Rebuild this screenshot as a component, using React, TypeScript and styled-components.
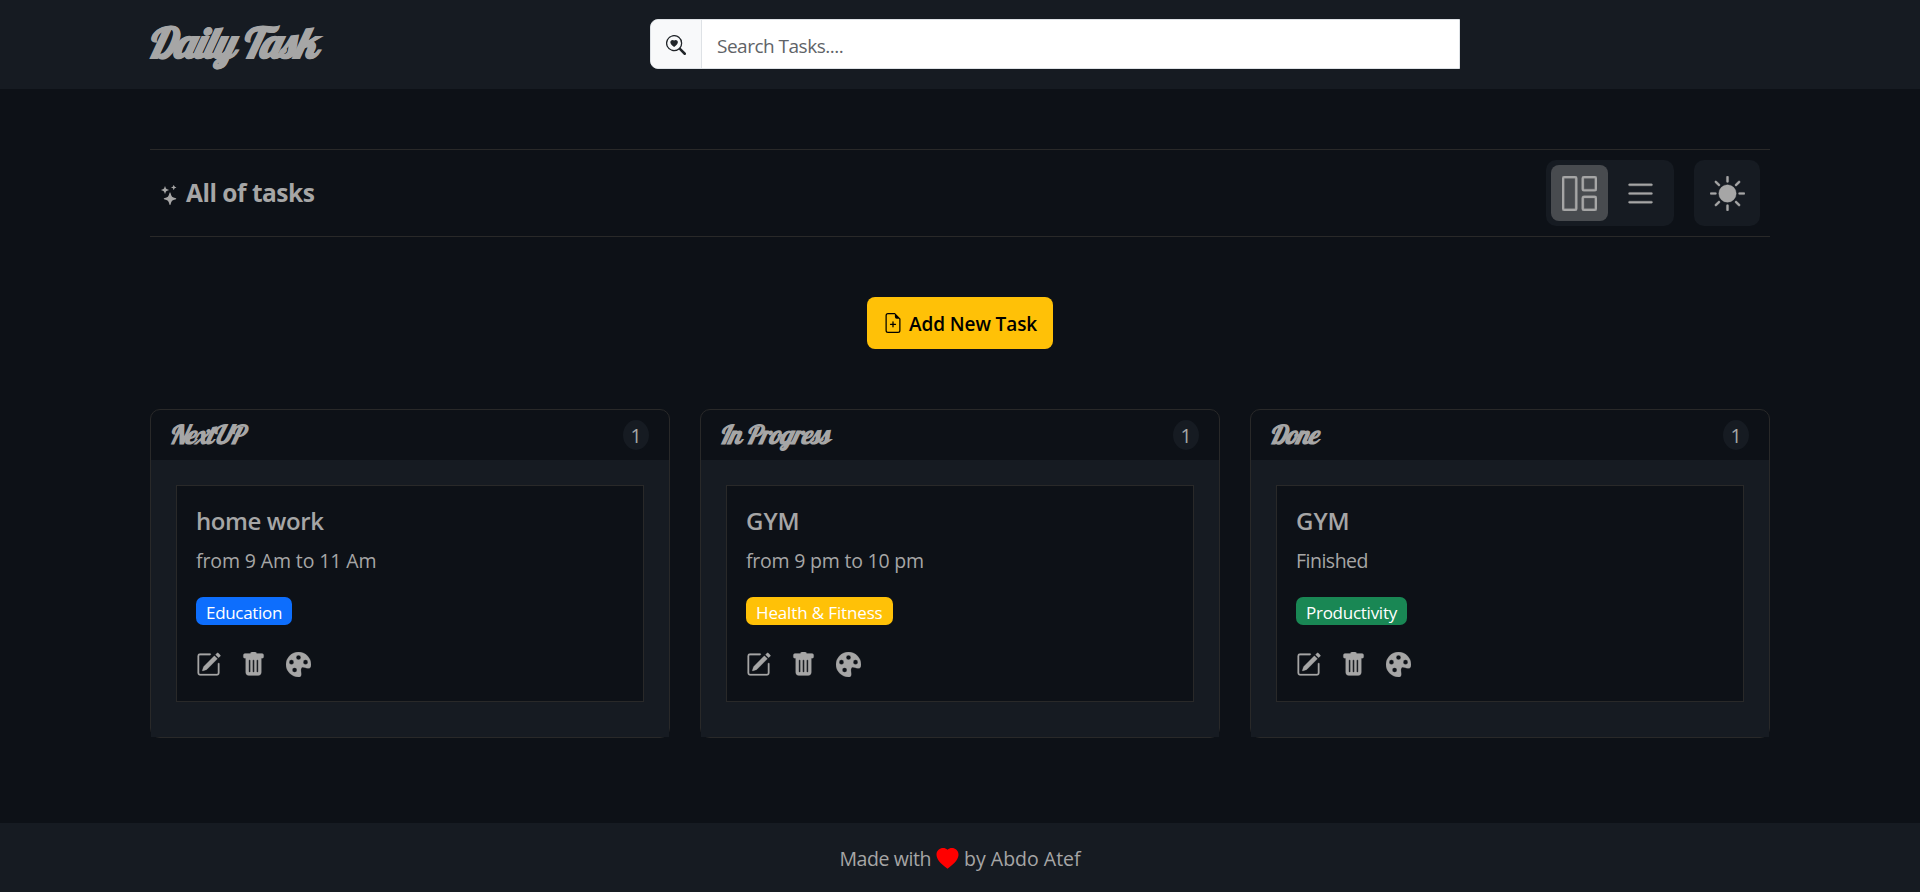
import React from 'react';
import styled, { createGlobalStyle } from 'styled-components';
import {
  BsFileEarmarkPlus,
  BsGrid1X2,
  BsHeartFill,
  BsList,
  BsPaletteFill,
  BsPencilSquare,
  BsSearchHeart,
  BsStars,
  BsSunFill,
  BsTrashFill,
} from 'react-icons/bs';

const color = {
  page: '#0d1117',
  panel: '#161b22',
  line: '#292929',
  text: '#a6a6a6',
  active: '#484b4f',
  yellow: '#ffc107',
};

const GlobalStyle = createGlobalStyle`
  *, *::before, *::after { box-sizing: border-box; }
  body {
    margin: 0;
    background: ${color.page};
    color: ${color.text};
    font-family: "Segoe UI", "Open Sans", "Noto Sans", sans-serif;
    font-size: 19.5px;
    line-height: 30px;
  }
  h1, h2, h3, p { margin: 0; }
  button, input { font: inherit; color: inherit; }
  svg { display: block; }
`;

const Page = styled.div`
  display: flex;
  flex-direction: column;
  min-height: 892px;
`;

const Container = styled.div`
  width: 1620px;
  margin: 0 auto;
`;

const Header = styled.header`
  height: 89px;
  background: ${color.panel};
`;

const HeaderRow = styled(Container)`
  display: grid;
  grid-template-columns: 500px 810px;
  align-items: center;
  height: 88px;
`;

const Logo = styled.h1`
  margin: -2px 0 0 -3px;
  font-family: Lobster, "Liberation Serif", serif;
  font-size: 42px;
  font-style: italic;
  font-weight: 700;
  line-height: 56px;
  letter-spacing: -1.4px;
  -webkit-text-stroke: 0.8px ${color.text};
`;

const SearchGroup = styled.div`
  display: flex;
  height: 50px;
  border: 1px solid #dee2e6;
  border-radius: 8px 0 0 8px;
  background: #fff;
  overflow: hidden;
`;

const SearchAddon = styled.span`
  display: flex;
  align-items: center;
  justify-content: center;
  width: 51px;
  border-right: 1px solid #dee2e6;
  background: #f8f9fa;
  color: #212529;
  font-size: 20px;
  svg { margin-top: 2px; }
`;

const SearchInput = styled.input`
  flex: 1;
  border: 0;
  outline: 0;
  padding: 3px 15px 0;
  background: transparent;
  color: #212529;
  font-size: 19px;
  letter-spacing: -0.5px;
  &::placeholder {
    color: #5f6367;
    opacity: 1;
  }
`;

const Main = styled(Container)`
  flex: 1;
  display: flex;
  flex-direction: column;
  padding-top: 60px;
`;

const Toolbar = styled.section`
  display: flex;
  align-items: center;
  justify-content: space-between;
  height: 88px;
  padding: 0 10px;
  border-top: 1px solid ${color.line};
  border-bottom: 1px solid ${color.line};
`;

const ToolbarTitle = styled.h2`
  display: flex;
  align-items: center;
  gap: 6px;
  font-size: 24.5px;
  font-weight: 700;
  letter-spacing: -0.48px;
  svg {
    width: 20px;
    height: 20px;
    margin-top: 4px;
  }
`;

const ToolbarActions = styled.div`
  display: flex;
  gap: 20px;
`;

const ViewSwitch = styled.div`
  display: flex;
  gap: 4px;
  padding: 5px;
  border-radius: 10px;
  background: ${color.panel};
`;

const ViewButton = styled.button<{ $active?: boolean }>`
  display: grid;
  place-items: center;
  width: 57px;
  height: 56px;
  padding: 0;
  border: 0;
  border-radius: 8px;
  background: ${({ $active }) => ($active ? color.active : 'transparent')};
  font-size: 35px;
  svg { stroke: currentColor; stroke-width: 0.15px; }
`;

const ThemeButton = styled.button`
  display: grid;
  place-items: center;
  width: 66px;
  height: 66px;
  padding: 0;
  border: 0;
  border-radius: 10px;
  background: ${color.panel};
  font-size: 35px;
  svg { stroke: currentColor; stroke-width: 0.15px; }
`;

const AddButton = styled.button`
  display: flex;
  align-items: center;
  align-self: center;
  gap: 6px;
  width: 186px;
  height: 52px;
  margin-top: 60px;
  padding: 0 16px;
  border: 0;
  border-radius: 8px;
  background: ${color.yellow};
  color: #000;
  font-size: 19px;
  font-weight: 600;
  letter-spacing: -0.1px;
  white-space: nowrap;
  svg { flex: none; width: 20px; height: 20px; }
  span { padding-top: 2px; }
`;

const Board = styled.section`
  display: grid;
  grid-template-columns: repeat(3, 1fr);
  gap: 30px;
  margin-top: 60px;
`;

const Column = styled.article`
  border: 1px solid ${color.line};
  border-radius: 10px;
`;

const ColumnHeader = styled.header`
  display: flex;
  align-items: center;
  justify-content: space-between;
  height: 50px;
  padding: 0 20px;
`;

const ColumnTitle = styled.h2<{ $track: number }>`
  margin-left: -2px;
  font-family: Lobster, "Liberation Serif", serif;
  font-size: 26px;
  font-style: italic;
  font-weight: 700;
  letter-spacing: ${({ $track }) => $track}px;
`;

const Count = styled.span`
  width: 26px;
  height: 30px;
  padding-top: 1px;
  border-radius: 50%;
  background: ${color.panel};
  font-size: 19.5px;
  text-align: center;
`;

const ColumnBody = styled.div`
  height: 277px;
  padding: 25px;
  background: ${color.panel};
`;

const Card = styled.div`
  height: 217px;
  padding: 20px 19px 0;
  border: 1px solid ${color.line};
  background: ${color.page};
`;

const CardTitle = styled.h3<{ $track: number }>`
  font-size: 24px;
  font-weight: 600;
  letter-spacing: ${({ $track }) => $track}px;
`;

const CardText = styled.p<{ $track: number }>`
  margin-top: 10px;
  letter-spacing: ${({ $track }) => $track}px;
`;

const Badge = styled.span<{ $bg: string; $track: number }>`
  display: block;
  width: fit-content;
  height: 28px;
  margin-top: 21px;
  padding: 2px 10px 0;
  border-radius: 7px;
  background: ${({ $bg }) => $bg};
  color: #fff;
  font-size: 17px;
  line-height: 28px;
  letter-spacing: ${({ $track }) => $track}px;
`;

const CardActions = styled.div`
  display: flex;
  gap: 20px;
  margin-top: 27px;
  font-size: 25px;
  svg { stroke: currentColor; stroke-width: 0.15px; }
`;

const Footer = styled.footer`
  display: flex;
  align-items: center;
  justify-content: center;
  gap: 5px;
  height: 69px;
  padding-top: 3px;
  background: ${color.panel};
`;

const FooterText = styled.span<{ $track?: number }>`
  letter-spacing: ${({ $track = 0 }) => $track}px;
`;

const Heart = styled(BsHeartFill)`
  width: 23px;
  height: 22px;
  color: #f00;
`;

interface Task {
  column: string;
  columnTrack: number;
  title: string;
  titleTrack: number;
  text: string;
  textTrack: number;
  category: string;
  categoryColor: string;
  categoryTrack: number;
}

const tasks: Task[] = [
  {
    column: 'NextUP',
    columnTrack: -1.3,
    title: 'home work',
    titleTrack: -0.4,
    text: 'from 9 Am to 11 Am',
    textTrack: -0.12,
    category: 'Education',
    categoryColor: '#0d6efd',
    categoryTrack: -0.3,
  },
  {
    column: 'In Progress',
    columnTrack: -0.7,
    title: 'GYM',
    titleTrack: 0,
    text: 'from 9 pm to 10 pm',
    textTrack: -0.22,
    category: 'Health & Fitness',
    categoryColor: '#ffc107',
    categoryTrack: -0.14,
  },
  {
    column: 'Done',
    columnTrack: -0.9,
    title: 'GYM',
    titleTrack: 0,
    text: 'Finished',
    textTrack: -0.5,
    category: 'Productivity',
    categoryColor: '#198754',
    categoryTrack: -0.26,
  },
];

const TaskColumn = ({ task }: { task: Task }) => (
  <Column>
    <ColumnHeader>
      <ColumnTitle $track={task.columnTrack}>{task.column}</ColumnTitle>
      <Count>1</Count>
    </ColumnHeader>
    <ColumnBody>
      <Card>
        <CardTitle $track={task.titleTrack}>{task.title}</CardTitle>
        <CardText $track={task.textTrack}>{task.text}</CardText>
        <Badge $bg={task.categoryColor} $track={task.categoryTrack}>
          {task.category}
        </Badge>
        <CardActions>
          <BsPencilSquare />
          <BsTrashFill />
          <BsPaletteFill />
        </CardActions>
      </Card>
    </ColumnBody>
  </Column>
);

export default function App() {
  return (
    <Page>
      <GlobalStyle />
      <Header>
        <HeaderRow>
          <Logo>Daily Task</Logo>
          <SearchGroup>
            <SearchAddon>
              <BsSearchHeart />
            </SearchAddon>
            <SearchInput placeholder="Search Tasks...." />
          </SearchGroup>
        </HeaderRow>
      </Header>
      <Main as="main">
        <Toolbar>
          <ToolbarTitle>
            <BsStars />
            All of tasks
          </ToolbarTitle>
          <ToolbarActions>
            <ViewSwitch>
              <ViewButton $active aria-label="Grid view">
                <BsGrid1X2 />
              </ViewButton>
              <ViewButton aria-label="List view">
                <BsList />
              </ViewButton>
            </ViewSwitch>
            <ThemeButton aria-label="Toggle theme">
              <BsSunFill />
            </ThemeButton>
          </ToolbarActions>
        </Toolbar>
        <AddButton>
          <BsFileEarmarkPlus />
          <span>Add New Task</span>
        </AddButton>
        <Board>
          {tasks.map((task) => (
            <TaskColumn key={task.column} task={task} />
          ))}
        </Board>
      </Main>
      <Footer>
        <FooterText $track={-0.4}>Made with</FooterText>
        <Heart />
        <FooterText>by Abdo Atef</FooterText>
      </Footer>
    </Page>
  );
}
